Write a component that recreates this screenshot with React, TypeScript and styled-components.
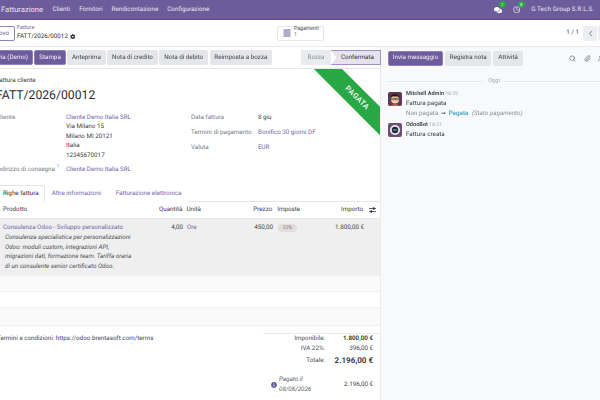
import { FC } from "react";
import styled, { createGlobalStyle, css } from "styled-components";
import { ChevronLeft, ChevronRight, Clock, Paperclip, Search, UserPlus } from "lucide-react";
import { FaAlignJustify, FaCog, FaComments, FaInfoCircle } from "react-icons/fa";

const PURPLE = "#6d5c9b";
const LINK = "#7367a9";

const GlobalStyle = createGlobalStyle`
  html, body { margin: 0; padding: 0; }
  body {
    font-family: Roboto, "Liberation Sans", sans-serif;
    font-size: 6.25px;
    color: #3c4148;
    background: #fff;
    text-rendering: geometricPrecision;
  }
`;

const MiraAvatar: FC = () => (
  <svg width="14" height="14" viewBox="0 0 14 14">
    <rect width="14" height="14" rx="2" fill="#5c3a56" />
    <circle cx="7" cy="7.5" r="4" fill="#f2c9a5" />
    <path d="M2.5 6 Q3 1.5 7 2 Q11 1.5 11.5 6 L10 4.5 L4 4.5 Z" fill="#221c20" />
    <rect x="3.8" y="6.2" width="2.6" height="1.7" fill="none" stroke="#222" strokeWidth=".5" />
    <rect x="7.6" y="6.2" width="2.6" height="1.7" fill="none" stroke="#222" strokeWidth=".5" />
    <path d="M2.5 14 Q7 10 11.5 14 Z" fill="#d9534f" />
  </svg>
);

const BotAvatar: FC = () => (
  <svg width="14" height="14" viewBox="0 0 14 14">
    <rect width="14" height="14" rx="2" fill="#6e4d78" />
    <circle cx="7" cy="7" r="5" fill="#eceaf0" />
    <circle cx="7" cy="7" r="3.2" fill="#23262b" />
    <rect x="4.8" y="6.4" width="4.4" height="1" rx=".5" fill="#58c4cf" />
  </svg>
);

const AdjustIcon: FC = () => (
  <svg width="7" height="6" viewBox="0 0 7 6" fill="none" stroke="#3c4148" strokeWidth=".8">
    <path d="M0 1.5H7M0 4.5H7" />
    <circle cx="4.6" cy="1.5" r=".9" fill="#3c4148" />
    <circle cx="2.4" cy="4.5" r=".9" fill="#3c4148" />
  </svg>
);

const App: FC = () => {
  return (
    <>
      <GlobalStyle />
      <Stage>
        <Navbar>
          <AppName>Fatturazione</AppName>
          <MenuItem>Clienti</MenuItem>
          <MenuItem>Fornitori</MenuItem>
          <MenuItem>Rendicontazione</MenuItem>
          <MenuItem>Configurazione</MenuItem>
          <NavRight>
            <NavIcon>
              <FaComments size={8} />
              <Badge>7</Badge>
            </NavIcon>
            <NavIcon>
              <Clock size={7.5} />
              <Badge>8</Badge>
            </NavIcon>
            <Company>G Tech Group S.R.L.S.</Company>
          </NavRight>
        </Navbar>

        <ControlPanel>
          <NewButton>Nuovo</NewButton>
          <Breadcrumb>
            <Crumb>Fatture</Crumb>
            <CurrentCrumb>
              FATT/2026/00012 <FaCog size={5.5} />
            </CurrentCrumb>
          </Breadcrumb>
          <StatButton>
            <FaAlignJustify size={8} color="#5f5a8f" />
            <StatText>
              <span>Pagamenti</span>
              <StatCount>1</StatCount>
            </StatText>
          </StatButton>
          <Pager>
            <span>1 / 1</span>
            <PagerButton>
              <ChevronLeft size={9} />
            </PagerButton>
            <PagerButton>
              <ChevronRight size={9} />
            </PagerButton>
          </Pager>
        </ControlPanel>

        <Columns>
          <MainColumn>
            <StatusBar>
              <Actions>
                <ActionButton $primary $clip>
                  Invia (Demo)
                </ActionButton>
                <ActionButton $primary>Stampa</ActionButton>
                <ActionButton>Anteprima</ActionButton>
                <ActionButton>Nota di credito</ActionButton>
                <ActionButton>Nota di debito</ActionButton>
                <ActionButton>Reimposta a bozza</ActionButton>
              </Actions>
              <Steps>
                <Step>Bozza</Step>
                <Step $active>Confermata</Step>
              </Steps>
            </StatusBar>

            <Sheet>
              <Ribbon>PAGATA</Ribbon>
              <Head>
                <DocType>Fattura cliente</DocType>
                <DocTitle>FATT/2026/00012</DocTitle>
              </Head>

              <FieldGroups>
                <LeftFields>
                  <FieldLabel>Cliente</FieldLabel>
                  <div>
                    <Link>Cliente Demo Italia SRL</Link>
                    <AddressLine>Via Milano 15</AddressLine>
                    <AddressLine>Milano MI 20121</AddressLine>
                    <AddressLine>Italia</AddressLine>
                    <AddressLine>12345670017</AddressLine>
                  </div>
                  <DeliveryLabel>
                    Indirizzo di consegna <Hint>?</Hint>
                  </DeliveryLabel>
                  <DeliveryValue>Cliente Demo Italia SRL</DeliveryValue>
                </LeftFields>
                <RightFields>
                  <FieldLabel>Data fattura</FieldLabel>
                  <span>8 giu</span>
                  <FieldLabel>Termini di pagamento</FieldLabel>
                  <Link>Bonifico 30 giorni DF</Link>
                  <FieldLabel>Valuta</FieldLabel>
                  <Link>EUR</Link>
                </RightFields>
              </FieldGroups>

              <Tabs>
                <Tab $active>Righe fattura</Tab>
                <Tab>Altre informazioni</Tab>
                <Tab>Fatturazione elettronica</Tab>
              </Tabs>

              <HeaderRow>
                <span>Prodotto</span>
                <NumCell>Quantità</NumCell>
                <span>Unità</span>
                <NumCell>Prezzo</NumCell>
                <span>Imposte</span>
                <NumCell>Importo</NumCell>
                <AdjustCell>
                  <AdjustIcon />
                </AdjustCell>
              </HeaderRow>
              <LineRow>
                <div>
                  <Link>Consulenza Odoo - Sviluppo personalizzato</Link>
                  <Description>
                    Consulenza specialistica per personalizzazioni
                    <br />
                    Odoo: moduli custom, integrazioni API,
                    <br />
                    migrazioni dati, formazione team. Tariffa oraria
                    <br />
                    di un consulente senior certificato Odoo.
                  </Description>
                </div>
                <NumCell>4,00</NumCell>
                <Link>Ore</Link>
                <NumCell>450,00</NumCell>
                <div>
                  <TaxBadge>22%</TaxBadge>
                </div>
                <NumCell>1.800,00 €</NumCell>
                <span />
              </LineRow>
              <EmptyRow $stripe />
              <EmptyRow />
              <EmptyRow $stripe $last />

              <Footer>
                <Terms>Termini e condizioni: https://odoo.brentasoft.com/terms</Terms>
                <Totals>
                  <TotalLabel>Imponibile:</TotalLabel>
                  <TotalValue $bold>1.800,00 €</TotalValue>
                  <TotalLabel>IVA 22%:</TotalLabel>
                  <TotalValue>396,00 €</TotalValue>
                  <GrandLabel>Totale:</GrandLabel>
                  <GrandValue>2.196,00 €</GrandValue>
                  <TotalsGap />
                  <Paid>
                    <FaInfoCircle size={6} color="#5f5a9a" />
                    <PaidText>
                      Pagato il
                      <br />
                      08/06/2026
                    </PaidText>
                  </Paid>
                  <TotalValue>2.196,00 €</TotalValue>
                </Totals>
              </Footer>
            </Sheet>
          </MainColumn>

          <Chatter>
            <ChatterBar>
              <ActionButton $primary>Invia messaggio</ActionButton>
              <ActionButton>Registra nota</ActionButton>
              <ActionButton>Attività</ActionButton>
              <ChatterTools>
                <Search size={7} />
                <Paperclip size={7} />
                <UserPlus size={7} />
              </ChatterTools>
            </ChatterBar>
            <DayLine>Oggi</DayLine>
            <Message>
              <MiraAvatar />
              <MessageBody>
                <Author>
                  Mitchell Admin <Time>16:29</Time>
                </Author>
                <MessageText>Fattura pagata</MessageText>
                <Tracking>
                  Non pagata <Arrow>➞</Arrow> <NewValue>Pagata</NewValue> <TrackedField>(Stato pagamento)</TrackedField>
                </Tracking>
              </MessageBody>
            </Message>
            <Message>
              <BotAvatar />
              <MessageBody>
                <Author>
                  OdooBot <Time>16:27</Time>
                </Author>
                <MessageText>Fattura creata</MessageText>
              </MessageBody>
            </Message>
          </Chatter>
        </Columns>
      </Stage>
    </>
  );
};

export default App;

const Stage = styled.div`
  width: 600px;
  height: 400px;
  overflow: hidden;
  display: flex;
  flex-direction: column;
  line-height: 9.5px;
  filter: blur(0.3px);
`;

const Navbar = styled.div`
  height: 20px;
  flex: none;
  box-sizing: border-box;
  display: flex;
  align-items: center;
  padding-left: 1px;
  background: ${PURPLE};
  border-bottom: 1px solid #5d4e8a;
  color: #e9e6f1;
`;

const AppName = styled.span`
  font-size: 7.6px;
  margin-right: 9.5px;
`;

const MenuItem = styled.span`
  margin-right: 9px;
  font-size: 6.3px;
`;

const NavRight = styled.div`
  margin-left: auto;
  margin-right: 6px;
  display: flex;
  align-items: center;
`;

const NavIcon = styled.span`
  position: relative;
  display: flex;
  margin-right: 11px;
  color: #fff;
`;

const Badge = styled.span`
  position: absolute;
  top: -5px;
  left: 5px;
  width: 7px;
  height: 7px;
  border-radius: 50%;
  background: #28a745;
  color: #fff;
  font-size: 4px;
  line-height: 7px;
  text-align: center;
`;

const Company = styled.span`
  font-size: 6.3px;
  letter-spacing: 0.1px;
`;

const ControlPanel = styled.div`
  height: 26px;
  flex: none;
  box-sizing: border-box;
  display: flex;
  align-items: center;
  padding: 0 2px 0 0;
  background: #fff;
`;

const NewButton = styled.div`
  width: 30px;
  height: 15px;
  margin-left: -15px;
  box-sizing: border-box;
  border: 1px solid #8f84b8;
  border-radius: 2px;
  text-align: center;
  line-height: 13px;
  color: #5f5592;
  flex: none;
`;

const Breadcrumb = styled.div`
  margin-left: 2px;
  width: 260px;
  flex: none;
`;

const Crumb = styled.div`
  color: ${LINK};
  font-size: 5.5px;
  line-height: 7px;
`;

const CurrentCrumb = styled.div`
  display: flex;
  align-items: center;
  gap: 2.5px;
  line-height: 9px;
  color: #30343a;
`;

const StatButton = styled.div`
  width: 47px;
  height: 15px;
  box-sizing: border-box;
  display: flex;
  align-items: center;
  gap: 3px;
  padding-left: 5px;
  border: 1px solid #e4e6ea;
  border-radius: 2px;
  flex: none;
`;

const StatText = styled.div`
  display: flex;
  flex-direction: column;
  font-size: 5.2px;
  line-height: 5.6px;
`;

const StatCount = styled.span`
  color: ${LINK};
`;

const Pager = styled.div`
  margin-left: auto;
  display: flex;
  align-items: center;
  gap: 1px;
  margin-right: -14px;
  span {
    margin-right: 3px;
  }
`;

const PagerButton = styled.div`
  width: 14px;
  height: 15px;
  display: flex;
  align-items: center;
  justify-content: center;
  background: #eceef1;
  border-radius: 2px;
  color: #6b7078;
`;

const Columns = styled.div`
  flex: 1;
  display: flex;
  min-height: 0;
  border-top: 1px solid #e6e8eb;
`;

const MainColumn = styled.div`
  width: 381px;
  flex: none;
  display: flex;
  flex-direction: column;
  background: #f8f9fa;
`;

const StatusBar = styled.div`
  height: 22px;
  flex: none;
  box-sizing: border-box;
  display: flex;
  align-items: center;
  justify-content: space-between;
  background: #fff;
  border-bottom: 1px solid #e6e8eb;
`;

const Actions = styled.div`
  display: flex;
  gap: 1.6px;
`;

const ActionButton = styled.div<{ $primary?: boolean; $clip?: boolean }>`
  height: 15px;
  box-sizing: border-box;
  padding: 0 3.8px;
  ${(p) => p.$clip && "margin-left: -12.2px;"}
  display: flex;
  align-items: center;
  border-radius: 2px;
  white-space: nowrap;
  background: ${(p) => (p.$primary ? PURPLE : "#e4e6ea")};
  color: ${(p) => (p.$primary ? "#f1eef7" : "#40454c")};
  border: 1px solid ${(p) => (p.$primary ? "#8f7fb9" : "#e4e6ea")};
`;

const Steps = styled.div`
  display: flex;
  height: 15px;
`;

const Step = styled.div<{ $active?: boolean }>`
  box-sizing: border-box;
  width: ${(p) => (p.$active ? 50 : 30)}px;
  display: flex;
  align-items: center;
  justify-content: center;
  padding-left: ${(p) => (p.$active ? 3 : 0)}px;
  background: ${(p) => (p.$active ? "#e6e3ef" : "#e9ebee")};
  color: ${(p) => (p.$active ? "#2f3338" : "#8b9097")};
  border: 1px solid ${(p) => (p.$active ? "#9c92c3" : "#e9ebee")};
  clip-path: ${(p) => (p.$active ? "polygon(0 0, 100% 0, 100% 100%, 0 100%, 5px 50%)" : "none")};
`;

const Sheet = styled.div`
  position: relative;
  flex: 1;
  width: 380px;
  overflow: hidden;
  background: #fff;
  display: flex;
  flex-direction: column;
`;

const Ribbon = styled.div`
  position: absolute;
  top: 19px;
  right: -31px;
  width: 108px;
  height: 20px;
  background: #28a745;
  color: #fff;
  font-size: 7.5px;
  font-weight: 500;
  letter-spacing: 0.4px;
  line-height: 20px;
  text-align: center;
  transform: rotate(45deg);
`;

const Head = styled.div`
  padding: 7px 0 0 0;
  margin-left: -4px;
  height: 40px;
  flex: none;
  box-sizing: border-box;
`;

const DocType = styled.div`
  line-height: 9px;
  color: #3a3e44;
`;

const DocTitle = styled.div`
  font-size: 12.2px;
  line-height: 20px;
  color: #2b2e33;
`;

const FieldGroups = styled.div`
  height: 76px;
  flex: none;
  padding-top: 3.5px;
  box-sizing: border-box;
  display: flex;
  margin-left: -4px;
`;

const LeftFields = styled.div`
  width: 195px;
  flex: none;
  display: grid;
  grid-template-columns: 70px 1fr;
  align-content: start;
`;

const RightFields = styled.div`
  display: grid;
  grid-template-columns: 67px 1fr;
  grid-auto-rows: 15px;
  align-content: start;
`;

const FieldLabel = styled.span`
  color: #787d85;
  line-height: 9.5px;
`;

const DeliveryLabel = styled(FieldLabel)`
  margin-top: 5px;
  white-space: nowrap;
`;

const DeliveryValue = styled.a`
  margin-top: 5px;
  color: ${LINK};
`;

const Hint = styled.sup`
  color: #5ba6c9;
  font-size: 5px;
  line-height: 0;
`;

const Link = styled.a`
  display: block;
  color: ${LINK};
`;

const AddressLine = styled.div`
  color: #3c4148;
`;

const Tabs = styled.div`
  height: 17px;
  flex: none;
  box-sizing: border-box;
  display: flex;
  border-bottom: 1px solid #e3e5e9;
  margin-left: -4px;
`;

const Tab = styled.div<{ $active?: boolean }>`
  box-sizing: border-box;
  height: 17px;
  padding: 0 ${(p) => (p.$active ? 5 : 7.5)}px 0 ${(p) => (p.$active ? 6 : 7)}px;
  display: flex;
  align-items: center;
  color: ${(p) => (p.$active ? "#30343a" : LINK)};
  background: #fff;
  ${(p) =>
    p.$active &&
    `border: 1px solid #e3e5e9;
     border-bottom-color: #fff;
     border-radius: 2px 2px 0 0;`}
`;

const tableColumns = css`
  & > :nth-child(1) {
    width: 150px;
    white-space: nowrap;
  }
  & > :nth-child(2) {
    width: 30px;
  }
  & > :nth-child(3) {
    width: 56px;
    margin-left: 4px;
  }
  & > :nth-child(4) {
    width: 30px;
  }
  & > :nth-child(5) {
    width: 56px;
    margin-left: 5px;
  }
  & > :nth-child(6) {
    width: 30px;
    white-space: nowrap;
    display: flex;
    justify-content: flex-end;
  }
  & > :nth-child(7) {
    width: 16px;
  }
`;

const HeaderRow = styled.div`
  height: 17px;
  flex: none;
  box-sizing: border-box;
  display: flex;
  align-items: center;
  padding-left: 3px;
  border-bottom: 1px solid #e7e9ec;
  color: #40454c;
  ${tableColumns}
`;

const LineRow = styled.div`
  height: 57px;
  flex: none;
  box-sizing: border-box;
  display: flex;
  align-items: flex-start;
  padding: 4px 0 0 3px;
  background: #efefef;
  ${tableColumns}
`;

const NumCell = styled.span`
  text-align: right;
`;

const AdjustCell = styled.span`
  display: flex;
  justify-content: center;
  padding-left: 1px;
`;

const Description = styled.div`
  margin: 0.5px 0 0 2px;
  font-style: italic;
  color: #4b4f56;
  line-height: 9.7px;
`;

const TaxBadge = styled.span`
  display: inline-block;
  width: 19px;
  height: 8px;
  margin-top: 0.5px;
  border-radius: 4px;
  background: #e3dcdc;
  color: #6f6a70;
  font-size: 5px;
  line-height: 8px;
  text-align: center;
`;

const EmptyRow = styled.div<{ $stripe?: boolean; $last?: boolean }>`
  height: ${(p) => (p.$last ? 18 : 16)}px;
  flex: none;
  box-sizing: border-box;
  background: ${(p) => (p.$stripe ? "#fafafa" : "#fff")};
  border-bottom: 1px solid #f0f1f3;
`;

const Footer = styled.div`
  flex: 1;
  display: flex;
  justify-content: space-between;
  padding-top: 7px;
`;

const Terms = styled.div`
  margin: 1px 0 0 -3px;
  color: #44484f;
  white-space: nowrap;
`;

const Totals = styled.div`
  width: 117px;
  padding: 0 7px 0 0;
  box-sizing: border-box;
  align-self: flex-start;
  border-top: 1px solid #e8eaed;
  display: grid;
  grid-template-columns: 62px 1fr;
  grid-auto-rows: min-content;
  align-items: center;
  row-gap: 0.4px;
`;

const TotalsGap = styled.div`
  grid-column: 1 / -1;
  height: 7.5px;
`;

const TotalLabel = styled.span`
  text-align: right;
  color: #4d5158;
`;

const TotalValue = styled.span<{ $bold?: boolean }>`
  text-align: right;
  font-weight: ${(p) => (p.$bold ? 700 : 400)};
  color: #3c4148;
`;

const GrandLabel = styled(TotalLabel)`
  line-height: 13px;
`;

const GrandValue = styled(TotalValue)`
  font-size: 8px;
  font-weight: 700;
  line-height: 13px;
`;

const Paid = styled.div`
  padding-left: 8px;
  display: flex;
  align-items: center;
  gap: 2px;
`;

const PaidText = styled.div`
  font-style: italic;
  color: #5d6168;
`;

const Chatter = styled.div`
  flex: 1;
  background: #f8f9fa;
  border-left: 1px solid #e9ebee;
  margin-left: -1px;
`;

const ChatterBar = styled.div`
  height: 22px;
  box-sizing: border-box;
  display: flex;
  align-items: center;
  gap: 2px;
  padding-left: 7px;
`;

const ChatterTools = styled.div`
  margin-left: auto;
  margin-right: -5px;
  display: flex;
  gap: 7.5px;
  color: #5c6168;
`;

const DayLine = styled.div`
  margin: 8px 0 0 7px;
  display: flex;
  align-items: center;
  gap: 5px;
  color: #a3a7ad;
  font-size: 5.6px;
  &::before,
  &::after {
    content: "";
    flex: 1;
    height: 1px;
    background: #e6e8eb;
  }
`;

const Message = styled.div`
  display: flex;
  gap: 4px;
  margin: 5px 0 0 7px;
  & > svg {
    flex: none;
  }
`;

const MessageBody = styled.div`
  margin-top: -1px;
  white-space: nowrap;
`;

const Author = styled.div`
  font-size: 5.6px;
  font-weight: 700;
  line-height: 7.5px;
  color: #4b4f56;
`;

const Time = styled.span`
  font-weight: 400;
  color: #9a9ea5;
  font-size: 5px;
`;

const MessageText = styled.div`
  margin-top: 1px;
  color: #3c4148;
`;

const Tracking = styled.div`
  color: #8b9097;
  line-height: 9px;
`;

const Arrow = styled.span`
  color: #4b4f56;
  margin: 0 1px;
`;

const NewValue = styled.span`
  color: #3d9fc0;
  font-weight: 500;
`;

const TrackedField = styled.em`
  margin-left: 2px;
`;
